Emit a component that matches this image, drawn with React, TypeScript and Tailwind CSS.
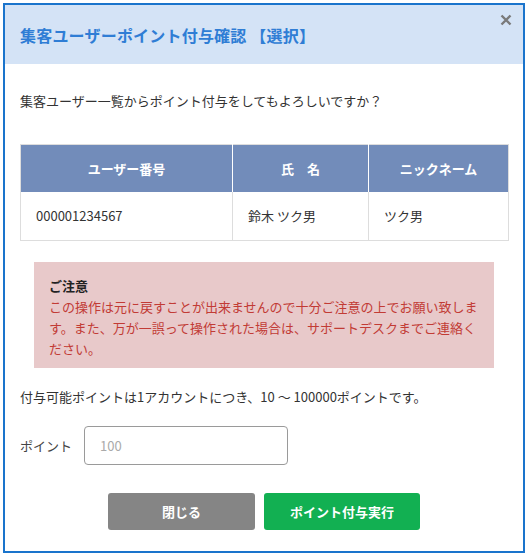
export default function App() {
  return (
    <div className="w-[528px] h-[556px] bg-white p-[3px] font-['Noto_Sans_CJK_JP','Noto_Sans',sans-serif]">
      <div className="h-full border-2 border-[#1a74cc] flex flex-col">
        {/* Header */}
        <div className="relative h-[59px] bg-[#d4e3f6] flex items-center pl-[15px]">
          <h1 className="text-[16px] font-bold text-[#2f7dd5] tracking-[0.2px]">
            集客ユーザーポイント付与確認 【選択】
          </h1>
          <button className="absolute right-[11px] top-[9px] w-[12px] h-[12px]">
            <svg viewBox="0 0 12 12" className="w-[12px] h-[12px]">
              <path d="M1.5 1.5 L10.5 10.5 M10.5 1.5 L1.5 10.5" stroke="#7a7a7a" strokeWidth="2.4" />
            </svg>
          </button>
        </div>

        {/* Body */}
        <div className="px-[15px] pt-[26px] text-[13px] text-[#333]">
          <p className="leading-[22px]">集客ユーザー一覧からポイント付与をしてもよろしいですか？</p>

          <table className="mt-[32px] w-[489px] border-collapse border border-[#ddd] text-[13px]">
            <thead>
              <tr className="bg-[#728cba] text-white h-[47px]">
                <th className="w-[212px] font-bold border-r border-white">ユーザー番号</th>
                <th className="w-[136px] font-bold border-r border-white">氏　名</th>
                <th className="font-bold">ニックネーム</th>
              </tr>
            </thead>
            <tbody>
              <tr className="h-[49px] text-[#333]">
                <td className="pl-[15px] border-r border-[#ddd]">000001234567</td>
                <td className="pl-[15px] border-r border-[#ddd]">鈴木 ツク男</td>
                <td className="pl-[15px]">ツク男</td>
              </tr>
            </tbody>
          </table>

          <div className="mt-[21px] mx-[14px] bg-[#e8c9ca] px-[15px] pt-[14px] pb-[9px]">
            <p className="font-bold text-[#222] leading-[20px]">ご注意</p>
            <p className="text-[#c23b35] leading-[21px]">
              この操作は元に戻すことが出来ませんので十分ご注意の上でお願い致します。また、万が一誤って操作された場合は、サポートデスクまでご連絡ください。
            </p>
          </div>

          <p className="mt-[18px] leading-[22px]">付与可能ポイントは1アカウントにつき、10 ～ 100000ポイントです。</p>

          <div className="mt-[18px] flex items-center">
            <label className="w-[64px] text-[#444]">ポイント</label>
            <input
              className="w-[204px] h-[39px] rounded-[4px] border border-[#9a9a9a] px-[15px] text-[13px] outline-none placeholder:text-[#aaa]"
              placeholder="100"
            />
          </div>

          <div className="mt-[28px] flex justify-center gap-[9px]">
            <button className="w-[147px] h-[37px] rounded-[3px] bg-[#858585] text-white font-bold text-[13px]">
              閉じる
            </button>
            <button className="w-[156px] h-[37px] rounded-[3px] bg-[#12b052] text-white font-bold text-[13px]">
              ポイント付与実行
            </button>
          </div>
        </div>
      </div>
    </div>
  )
}
